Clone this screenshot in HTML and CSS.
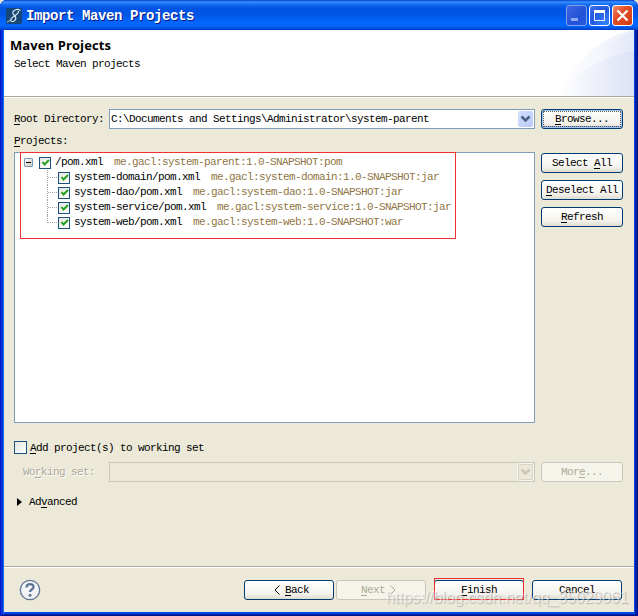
FILE: index.html
```html
<!DOCTYPE html>
<html lang="en">
<head>
<meta charset="utf-8">
<title>Import Maven Projects</title>
<link rel="stylesheet" href="styles.css">
</head>
<body>
<div class="window">
  <header class="titlebar">
    <svg class="app-icon" width="16" height="16" viewBox="0 0 16 16"><rect width="16" height="16" rx="2" fill="#164776"/><path d="M14.500 2.500C11 0 6 2.500 7 5.500s4 3 2.500 6-6 2.500-4.500-.5S13 7 12.500 3" fill="none" stroke="#dce8ef" stroke-width="1.200"/><path d="M5 12L1 14" stroke="#b5c9d6"/></svg>
    <h1>Import Maven Projects</h1>
    <div class="captions">
      <span class="caption min"><svg width="19" height="19"><path d="M4 12h7v3H4z" fill="#8fa9f0"/></svg></span>
      <span class="caption"><svg width="19" height="19"><path d="M4.500 5v9.500h10V5" fill="none" stroke="#fff"/><path d="M4 4h11v3H4z" fill="#fff"/></svg></span>
      <span class="caption close"><svg width="19" height="19"><path d="M4.500 4.500l10 10m0-10l-10 10" stroke="#fff" stroke-width="2.200"/></svg></span>
    </div>
  </header>
  <section class="banner">
    <svg class="banner-art" width="76" height="66" viewBox="0 0 76 66"><defs><linearGradient id="fade"><stop stop-color="#fff"/><stop offset="1" stop-color="#dce2f5"/></linearGradient></defs><path d="M0 66C13 35 41 6 76 0v66z" fill="url(#fade)" opacity=".55"/><path d="M25 66C33 36 49 11 76 1v65z" fill="url(#fade)" opacity=".5"/><path d="M0 66C22 39 47 26 76 21v45z" fill="url(#fade)"/></svg>
    <h2>Maven Projects</h2>
    <p>Select Maven projects</p>
  </section>
  <main>
    <div class="row">
      <label class="dir-label"><u>R</u>oot Directory:</label>
      <div class="combo"><span>C:\Documents and Settings\Administrator\system-parent</span><i class="drop"><svg width="15" height="16"><path d="M3.500 5.500L7.500 9.500l4-4" fill="none" stroke="#4d6185" stroke-width="2.500"/></svg></i></div>
      <button class="btn focused"><u>B</u>rowse...</button>
    </div>
    <label class="projects-label"><u>P</u>rojects:</label>
    <div class="projects">
      <div class="list">
        <div class="tree">
          <div class="node root"><i class="expander"></i><i class="check"><svg width="9" height="9"><path d="M1.500 4l2 2.500L8 2" fill="none" stroke="#21a121" stroke-width="2"/></svg></i><b>/pom.xml</b><em>me.gacl:system-parent:1.0-SNAPSHOT:pom</em></div>
          <div class="node"><i class="branch"></i><i class="check"><svg width="9" height="9"><path d="M1.500 4l2 2.500L8 2" fill="none" stroke="#21a121" stroke-width="2"/></svg></i><b>system-domain/pom.xml</b><em>me.gacl:system-domain:1.0-SNAPSHOT:jar</em></div>
          <div class="node"><i class="branch"></i><i class="check"><svg width="9" height="9"><path d="M1.500 4l2 2.500L8 2" fill="none" stroke="#21a121" stroke-width="2"/></svg></i><b>system-dao/pom.xml</b><em>me.gacl:system-dao:1.0-SNAPSHOT:jar</em></div>
          <div class="node"><i class="branch"></i><i class="check"><svg width="9" height="9"><path d="M1.500 4l2 2.500L8 2" fill="none" stroke="#21a121" stroke-width="2"/></svg></i><b>system-service/pom.xml</b><em>me.gacl:system-service:1.0-SNAPSHOT:jar</em></div>
          <div class="node"><i class="branch last"></i><i class="check"><svg width="9" height="9"><path d="M1.500 4l2 2.500L8 2" fill="none" stroke="#21a121" stroke-width="2"/></svg></i><b>system-web/pom.xml</b><em>me.gacl:system-web:1.0-SNAPSHOT:war</em></div>
        </div>
      </div>
      <div class="side">
        <button class="btn">Select <u>A</u>ll</button>
        <button class="btn"><u>D</u>eselect All</button>
        <button class="btn"><u>R</u>efresh</button>
      </div>
    </div>
    <label class="working"><i class="check big"></i><span><u>A</u>dd project(s) to working set</span></label>
    <div class="row disabled">
      <label class="set-label">Wo<u>r</u>king set:</label>
      <div class="combo"><i class="drop"><svg width="15" height="16"><path d="M3.500 5.500L7.500 9.500l4-4" fill="none" stroke="#c9c7ba" stroke-width="2.500"/></svg></i></div>
      <button class="btn" disabled>Mor<u>e</u>...</button>
    </div>
    <div class="advanced"><svg width="5" height="8"><path d="M0 0l5 4-5 4z"/></svg><span>Ad<u>v</u>anced</span></div>
  </main>
  <footer>
    <svg class="help" width="22" height="22" viewBox="0 0 22 22"><circle cx="11" cy="11" r="9.700" fill="#f1f3f7" stroke="#627796" stroke-width="1.300"/><path d="M7.500 8.500C7.500 4 14.500 4 14.500 8c0 2.500-3.500 2.500-3.500 5" fill="none" stroke="#5e7394" stroke-width="2.300"/><circle cx="11" cy="16.300" r="1.500" fill="#5e7394"/></svg>
    <div class="nav">
      <button class="btn"><svg class="angle" width="6" height="10"><path d="M5.500 .5L1 5l4.500 4.500" fill="none" stroke="#000"/></svg><u>B</u>ack</button>
      <button class="btn" disabled><u>N</u>ext<svg class="angle" width="6" height="10"><path d="M.5 .5L5 5 .5 9.500" fill="none" stroke="#aca899"/></svg></button>
    </div>
    <button class="btn finish"><u>F</u>inish</button>
    <button class="btn">Cancel</button>
  </footer>
  <div class="watermark">https://blog.csdn.net/qq_35029061</div>
</div>
</body>
</html>
```
FILE: styles.css
```css
* { box-sizing: border-box; }
body {
  margin: 0;
  background: #ece9d8;
  font: 11px/15px "Liberation Mono", monospace;
  letter-spacing: -0.6px;
  color: #000;
}
h1, h2, p { margin: 0; }
i, em { font-style: normal; }
b { font-weight: normal; }
u { text-underline-offset: 2px; text-decoration-thickness: 1px; text-decoration-skip-ink: none; }
svg { display: block; flex: none; }

.window {
  position: relative;
  width: 638px;
  height: 616px;
  padding: 0 4px 4px;
  display: flex;
  flex-direction: column;
  background: #ece9d8;
  border-radius: 7px 7px 0 0;
  box-shadow: inset 1px 0 #0019cf, inset -1px 0 #00138c, inset 0 -1px #00138c,
    inset 3px 0 #0831d9, inset -3px 0 #001ea0, inset 0 -2px #001ea0,
    inset 4px 0 #166aee, inset -4px 0 #0046e8, inset 0 -4px #0046e8;
}
.titlebar {
  flex: none;
  height: 30px;
  margin: 0 -4px;
  padding: 1px 6px 0;
  display: flex;
  align-items: center;
  border-radius: 7px 7px 0 0;
  background: linear-gradient(#0042c8 0, #3a92ff 2px, #1771f4 4px, #0054e3 8px, #0055e5 14px, #0265fc 22px, #0366ff 26px, #0048ce 29px, #003dd7 30px);
}
h1 {
  flex: 1;
  margin-left: 4px;
  font: bold 14px/18px "Liberation Mono", monospace;
  letter-spacing: -0.4px;
  color: #fff;
  text-shadow: 1px 1px #0a1883;
}
.captions { display: flex; gap: 2px; margin-right: -1px; }
.caption {
  width: 21px;
  height: 21px;
  border: 1px solid #fff;
  border-radius: 3px;
  background: radial-gradient(circle at 80% 85%, #2f83ff, #2358df 60%, #4577e9);
}
.caption.min { border-color: #819de8; background: linear-gradient(135deg, #3f67df, #2351d8 60%, #285ce0); }
.caption.close { background: linear-gradient(135deg, #ef8d71, #e14e26 40%, #cf3f13); }

.banner {
  position: relative;
  flex: none;
  height: 68px;
  padding: 7px 6px 0;
  background: #fff;
  border-bottom: 1px solid #fff;
  box-shadow: inset 0 -1px #aca899;
}
.banner-art { position: absolute; right: 0; top: 0; }
h2 { font: bold 13px/16px "Open Sans", sans-serif; letter-spacing: 0.1px; }
.banner p { margin: 4px 0 0 4px; }

main { flex: 1; padding: 11px 11px 0 10px; }
.row { display: flex; height: 20px; }
.dir-label { width: 95px; padding-top: 3px; }
.combo {
  width: 426px;
  margin-right: 6px;
  padding: 1px;
  display: flex;
  justify-content: space-between;
  background: #fff;
  border: 1px solid #7f9db9;
}
.combo span { line-height: 16px; }
.drop {
  width: 15px;
  height: 16px;
  margin-left: auto;
  border-radius: 2px;
  background: linear-gradient(135deg, #d3dffd, #b8cbf8);
}
.btn {
  display: block;
  width: 82px;
  height: 20px;
  padding: 0;
  text-align: center;
  white-space: pre;
  font: 11px/18px "Liberation Mono", monospace;
  letter-spacing: inherit;
  color: #000;
  border: 1px solid #003c74;
  border-radius: 3px;
  background: linear-gradient(#fff, #f4f3ee 70%, #e0dccf);
}
.btn.focused { box-shadow: inset 0 0 0 1px #a6c3f3, inset 0 -2px #89ade4; outline: 1px dotted #555; outline-offset: -3px; }
.btn:disabled { color: #aca899; border-color: #c9c7ba; background: #f5f4ea; }
.projects-label { display: block; padding-top: 5px; height: 23px; }
.projects { display: flex; gap: 6px; }
.list { width: 521px; height: 271px; padding-left: 5px; background: #fff; border: 1px solid #7f9db9; }
.side { display: flex; flex-direction: column; gap: 7px; padding-top: 1px; }
.tree { width: 436px; height: 87px; margin-top: -1px; padding: 2px 0 0 3px; border: 1px solid #f03032; }
.node { display: flex; align-items: center; height: 15px; white-space: nowrap; }
.node b { margin-left: 4px; }
.node em { margin-left: 11px; color: #8f7644; }
.expander {
  position: relative;
  width: 9px;
  height: 9px;
  margin-right: 6px;
  border: 1px solid #7898b5;
  border-radius: 1px;
  background: linear-gradient(135deg, #fff, #ccc6b8);
}
.expander::after { content: ""; position: absolute; left: 1px; top: 3px; width: 5px; height: 1px; background: #000; }
.check {
  width: 12px;
  height: 12px;
  padding: 0 0 0 1px;
  border: 1px solid #1c5180;
  background: linear-gradient(135deg, #e4e4df, #fff);
  flex: none;
}
.big { width: 13px; height: 13px; }
.branch { align-self: stretch; width: 11px; margin-left: 23px; border-left: 1px dotted #aca899; background: repeating-linear-gradient(90deg, #aca899 0 1px, transparent 1px 2px) 0 7px / 9px 1px no-repeat; }
.branch.last { height: 8px; align-self: flex-start; }
.working { display: flex; align-items: center; gap: 3px; height: 15px; margin-top: 17px; }
.working span { padding-top: 1px; }
.disabled { margin-top: 7px; color: #aca899; }
.set-label { width: 95px; padding: 3px 0 0 9px; text-shadow: 1px 1px #fff; }
.disabled .combo { background: #ece9d8; border-color: #c9c7ba; }
.disabled .drop { background: #ece9d8; box-shadow: inset 0 0 0 1px #d7d4c5, 0 0 0 1px #f8f7f1; }
.advanced { display: flex; align-items: center; gap: 7px; margin: 12px 0 0 3px; }
.advanced span { padding-top: 1px; }

footer {
  flex: none;
  height: 46px;
  padding: 13px 12px 0 15px;
  display: flex;
  gap: 8px;
  border-top: 1px solid #aca899;
  box-shadow: inset 0 1px #fff;
}
.help { margin: -1px auto 0 0; }
.nav { display: flex; gap: 2px; }
footer .btn { width: 90px; }
.angle { display: inline-block; vertical-align: -2px; margin: 0 5px; }
footer .btn.finish { position: relative; }
.finish::after { content: ""; position: absolute; inset: -3px -1px -1px; border: 1px solid #f03032; }
.watermark {
  position: absolute;
  left: 386px;
  top: 589px;
  white-space: nowrap;
  font: 15.8px/18px "Liberation Sans", sans-serif;
  letter-spacing: 0;
  color: rgba(255, 255, 255, .55);
  text-shadow: 1px 1px 1px rgba(110, 110, 110, .4);
}
```
